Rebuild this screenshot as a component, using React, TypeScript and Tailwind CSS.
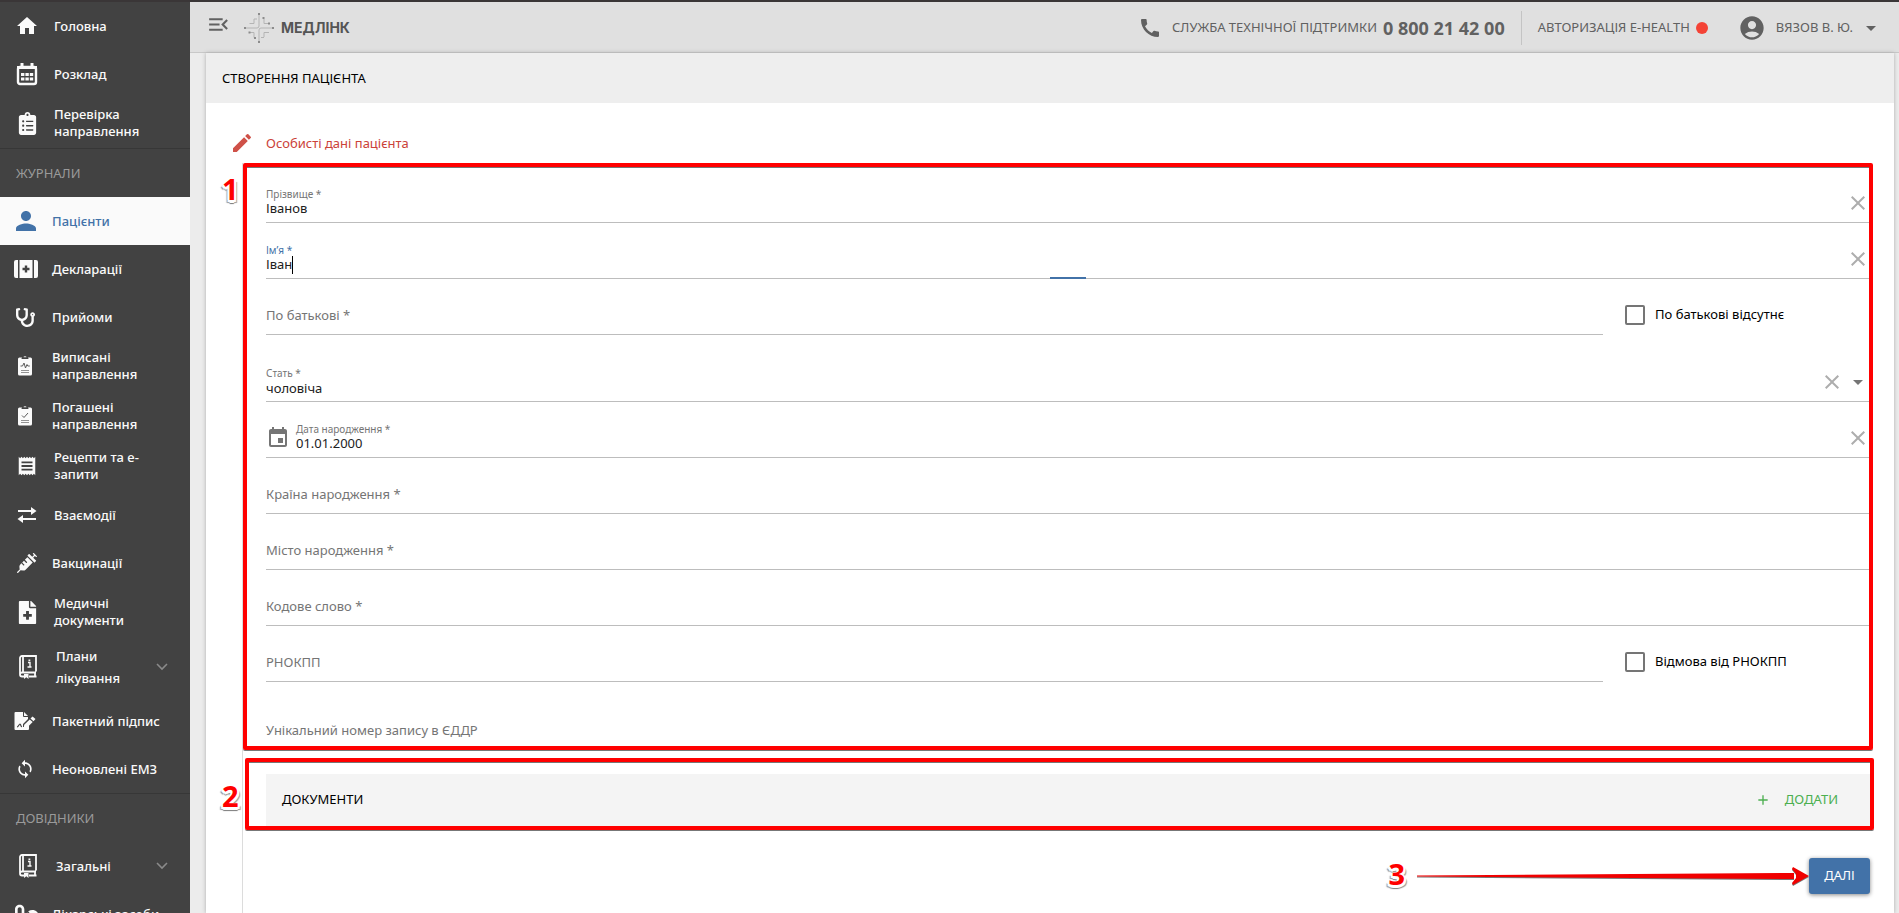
import { useState, type ReactNode } from "react";
import { FaClipboardList, FaFileMedical, FaPills, FaStethoscope, FaSyringe } from "react-icons/fa";
import {
  MdAccountCircle,
  MdAdd,
  MdArrowDropDown,
  MdCall,
  MdClose,
  MdCreate,
  MdEvent,
  MdHome,
  MdMenuOpen,
  MdPerson,
  MdReceipt,
  MdSync,
} from "react-icons/md";

function CalendarIcon() {
  return (
    <svg viewBox="0 0 22 24" className="w-[22px] h-6" fill="none" stroke="currentColor">
      <rect x="2" y="5" width="18" height="17" rx="2" strokeWidth="2.4" />
      <path d="M1 5.500h20M6 1v5M16 1v5" strokeWidth="3" />
      <path d="M5 12.500h3.400m1 0h3.400m1 0h3.400M5 17h3.400m1 0h3.400m1 0h3.400" strokeWidth="3.200" />
    </svg>
  );
}

function CaseIcon() {
  return (
    <svg viewBox="0 0 24 18" className="w-6 h-[18px] -ml-0.5">
      <path d="M2 0h2v18H2a2 2 0 0 1-2-2V2a2 2 0 0 1 2-2zM22 0h-2v18h2a2 2 0 0 0 2-2V2a2 2 0 0 0-2-2z" fill="currentColor" />
      <path d="M5.500 0h13v18h-13z" fill="currentColor" />
      <path d="M12 5.500v7M8.500 9h7" stroke="#424242" strokeWidth="2.400" />
    </svg>
  );
}

function ReferralIcon({ checked }: { checked?: boolean }) {
  return (
    <svg viewBox="0 0 16 20" className="w-4 h-5 -ml-1">
      <rect x="1" y="1.500" width="14" height="18" rx="1.500" fill="currentColor" />
      <path d="M4.500 3a3.500 2.400 0 0 1 7 0z" fill="#424242" />
      <path d="M6.500 1.200a1.500 1 0 0 1 3 0z" fill="currentColor" />
      <path
        d={checked ? "M5 9.500l2 2 4-4.500" : "M3.500 10h2l1.500-3 1.500 5 1.500-3.500.8 1.500h2"}
        fill="none"
        stroke="#5a5a5a"
        strokeWidth="1"
      />
      <path d="M4 14.500h8M4 16.500h8" stroke="#777" strokeWidth=".8" />
    </svg>
  );
}

function ExchangeIcon() {
  return (
    <svg viewBox="0 0 20 16" className="w-5 h-4">
      <path d="M1 4h14M5 12h14" stroke="currentColor" strokeWidth="2.200" />
      <path d="M14 0l5.500 4L14 8zM6 8L.5 12 6 16z" fill="currentColor" />
    </svg>
  );
}

function BookIcon() {
  return (
    <svg viewBox="0 0 18 24" className="w-[18px] h-6 ml-px" fill="none" stroke="currentColor">
      <path d="M17 16.500V1H3a2 2 0 0 0-2 2v16M4 1v15.500M17 17.500H3a2 2 0 0 0 0 4h2M10 21.500h7.500M16 17.500v4" strokeWidth="1.800" />
      <path d="M9 7.500h2V12M8.500 12h4" strokeWidth="1.400" />
      <path d="M9.500 5.300h1.800" strokeWidth="1.600" />
      <path d="M5 19h4.500v5l-2.200-1.800L5 24z" fill="currentColor" stroke="none" />
    </svg>
  );
}

function SignIcon() {
  return (
    <svg viewBox="0 0 22 20" className="w-[22px] h-5 -ml-1">
      <path d="M1.500 1H10l4 4v3l-5 5v3h3l3-2v4a1 1 0 0 1-1 1H1.500a1 1 0 0 1-1-1V2a1 1 0 0 1 1-1z" fill="currentColor" />
      <path d="M9.500 1v4.500H14" fill="none" stroke="#424242" strokeWidth="1" />
      <path d="M3 16c1.500 0 2-3 3-3s.5 3 2 2.500" fill="none" stroke="#424242" strokeWidth="1.200" />
      <path d="M18.500 5.500l3 2.500-2 2.200-3-2.600zM15.700 8.400l3 2.600-5.500 5.500-3.500.6.500-3.300z" fill="currentColor" />
    </svg>
  );
}

function LogoMark() {
  return (
    <svg viewBox="0 0 30 30" className="w-[30px] h-[30px]" fill="none" stroke="#b4b4b4" strokeWidth="1">
      <path d="M15 2v11q0 2-2 2H2M15 28V17q0-2 2-2h11" />
      <path d="M10 6v4.500H5.500M20 6v4.500h5M10 24.500v-5H5M20 24v-4.500h5M10 6h3M17 24.500h3" />
      <path d="M14 1h2M14 29h2M0 15h2M28 15h2M18.500 5h2M24 10.500h2M4.500 19.500h2M10 25h2" stroke="#8c8c8c" strokeWidth="2" />
    </svg>
  );
}

type Item = { label: string; icon: ReactNode; kind?: "wide" | "active" | "group"; indent?: boolean };

const MAIN: Item[] = [
  { label: "Головна", icon: <MdHome size={24} />, indent: true },
  { label: "Розклад", icon: <CalendarIcon />, indent: true },
  { label: "Перевірка направлення", icon: <FaClipboardList size={23} />, kind: "wide", indent: true },
];

const JOURNALS: Item[] = [
  { label: "Пацієнти", icon: <MdPerson size={30} className="-ml-0.5" />, kind: "active" },
  { label: "Декларації", icon: <CaseIcon /> },
  { label: "Прийоми", icon: <FaStethoscope size={19} className="-ml-1" /> },
  { label: "Виписані направлення", icon: <ReferralIcon />, kind: "wide" },
  { label: "Погашені направлення", icon: <ReferralIcon checked />, kind: "wide" },
  { label: "Рецепти та е-запити", icon: <MdReceipt size={22} />, kind: "wide", indent: true },
  { label: "Взаємодії", icon: <ExchangeIcon />, indent: true },
  { label: "Вакцинації", icon: <FaSyringe size={20} /> },
  { label: "Медичні документи", icon: <FaFileMedical size={23} />, kind: "wide", indent: true },
  { label: "Плани лікування", icon: <BookIcon />, kind: "group" },
  { label: "Пакетний підпис", icon: <SignIcon /> },
  { label: "Неоновлені ЕМЗ", icon: <MdSync size={20} className="-ml-1" /> },
];

const DIRECTORIES: Item[] = [
  { label: "Загальні", icon: <BookIcon />, kind: "group" },
  { label: "Лікарські засоби", icon: <FaPills size={24} /> },
];

function NavItem({ item }: { item: Item }) {
  const active = item.kind === "active";
  const group = item.kind === "group";

  return (
    <a
      href="#"
      className={
        "flex items-center shrink-0 min-h-12 py-2 pl-[13px] pr-4 text-[13px] font-medium " +
        (active ? "bg-[#fafafa] text-[#4272a8] " : "text-[#fafafa] ") +
        (group ? "leading-[22px]" : "leading-[17px]")
      }
    >
      <span className="w-7 shrink-0 flex justify-center">{item.icon}</span>
      <span className={"flex-1 " + (group ? "pl-[15px] pr-4" : item.indent ? "pl-[13px]" : "pl-[11px]")}>
        {item.label}
      </span>
      {group && (
        <svg viewBox="0 0 12 8" className="w-3 h-2 mr-1.5" fill="none" stroke="#8a8a8a" strokeWidth="1.600">
          <path d="M1 1l5 5 5-5" />
        </svg>
      )}
    </a>
  );
}

function Section({ title, items }: { title: string; items: Item[] }) {
  return (
    <>
      <h2 className="h-[49px] shrink-0 border-t border-[#373737] flex items-center pt-0.5 pl-4 text-[13px] text-[#9a9a9a]">
        {title}
      </h2>
      {items.map((item) => (
        <NavItem key={item.label} item={item} />
      ))}
    </>
  );
}

type FieldProps = {
  id: string;
  label: string;
  initial?: string;
  focused?: boolean;
  options?: string[];
  icon?: ReactNode;
};

function Field({ id, label, initial = "", focused, options, icon }: FieldProps) {
  const [value, setValue] = useState(initial);
  const filled = value !== "";
  const control = "block outline-none bg-transparent text-[13px] h-[18px] text-[#212121] ";

  return (
    <div className="relative flex-1 h-14 border-b border-[#bdbdbd] flex items-center">
      {icon && <span className="w-[30px] pt-4 text-[#757575]">{icon}</span>}
      <div className="flex-1 flex flex-col pt-4">
        <label
          htmlFor={id}
          className={
            filled
              ? "text-[10px] leading-3 " + (focused ? "text-[#4272a8]" : "text-[#757575]")
              : "text-[13px] leading-5 text-[#757575]"
          }
        >
          {label}
        </label>
        <div className={filled ? "flex items-center" : "h-0 overflow-hidden"}>
          {options ? (
            <select
              id={id}
              value={value}
              onChange={(e) => setValue(e.target.value)}
              className={control + "w-full appearance-none"}
            >
              {options.map((option) => (
                <option key={option}>{option}</option>
              ))}
            </select>
          ) : (
            <input
              id={id}
              value={value}
              onChange={(e) => setValue(e.target.value)}
              className={control + (focused ? "[field-sizing:content] caret-transparent" : "w-full")}
            />
          )}
          {focused && <span className="w-px h-[18px] bg-black" />}
        </div>
      </div>
      {filled && (
        <button type="button" aria-label="Очистити" onClick={() => setValue("")} className="pt-4 text-[#adadad]">
          <MdClose size={24} />
        </button>
      )}
      {options && <MdArrowDropDown size={24} className="box-content pt-4 pl-0.5 text-[#757575]" />}
      {focused && <span className="absolute left-1/2 -translate-x-1/2 -bottom-px w-9 h-0.5 bg-[#4272a8]" />}
    </div>
  );
}

function Check({ id, label }: { id: string; label: string }) {
  return (
    <div className="w-[245px] flex items-center gap-2.5 pt-4">
      <input id={id} type="checkbox" className="appearance-none w-5 h-5 border-2 border-[#757575] rounded-xs" />
      <label htmlFor={id} className="text-[13px] text-black">
        {label}
      </label>
    </div>
  );
}

// Callout number: red digit, white outline, thin grey shade under the outline
function Marker({ children }: { children: ReactNode }) {
  return (
    <span className="block font-['Open_Sans'] font-bold text-[29px] leading-8 text-[#ff0000] [text-shadow:2px_0_0_#fff,-2px_0_0_#fff,0_2px_0_#fff,2px_2px_0_#fff,-2px_2px_0_#fff,0_3px_0_#fff,3px_3px_1px_#999,-3px_3px_1px_#999,0_4px_1px_#777]">
      {children}
    </span>
  );
}

const FRAME = "absolute pointer-events-none border-4 border-[#ff0000] rounded-xs shadow-[0_1px_0_#777,inset_0_1px_0_#777]";

export default function App() {
  return (
    <div className="h-screen overflow-hidden flex flex-col border-t-2 border-[#3a3637] bg-[#ececec] font-['Noto_Sans',sans-serif]">
      <div className="flex-1 min-h-0 flex">
        <nav className="w-[190px] shrink-0 bg-[#424242] flex flex-col overflow-hidden">
          {MAIN.map((item) => (
            <NavItem key={item.label} item={item} />
          ))}
          <Section title="ЖУРНАЛИ" items={JOURNALS} />
          <Section title="ДОВІДНИКИ" items={DIRECTORIES} />
        </nav>

        <div className="flex-1 min-w-0 flex flex-col">
          <header className="h-[51px] shrink-0 bg-[#e0e0e0] border-b border-[#c8c8c8] flex items-center pt-0.5 pl-4 pr-4 text-[13px] text-[#616161]">
            <button type="button" aria-label="Меню" className="pb-2">
              <MdMenuOpen size={25} />
            </button>
            <a href="#" className="ml-[13px] flex items-center gap-[7px]">
              <LogoMark />
              <span className="font-['Inter'] font-bold text-sm text-[#555]">МЕДЛІНК</span>
            </a>
            <div className="ml-auto flex items-center">
              <MdCall size={24} />
              <span className="ml-2.5">СЛУЖБА ТЕХНІЧНОЇ ПІДТРИМКИ</span>
              <b className="ml-1.5 text-lg">0 800 21 42 00</b>
            </div>
            <div className="ml-4 pl-4 h-[34px] border-l border-[#c4c4c4] flex items-center">
              АВТОРИЗАЦІЯ E-HEALTH
              <span className="ml-1.5 w-3 h-3 rounded-full bg-[#f44336]" />
            </div>
            <button type="button" className="ml-[30px] flex items-center">
              <MdAccountCircle size={28} />
              <span className="ml-2.5">ВЯЗОВ В. Ю.</span>
              <MdArrowDropDown size={24} className="ml-1.5" />
            </button>
          </header>

          <main className="flex-1 ml-4 mr-[5px] bg-white shadow-[0_0_4px_#aaa] overflow-hidden">
            <h1 className="h-[50px] bg-[#eeeeee] flex items-center pt-0.5 pl-4 text-[13px] text-black">СТВОРЕННЯ ПАЦІЄНТА</h1>

            <div className="h-[60px] pt-5 flex items-center gap-3 pl-6">
              <MdCreate size={24} className="text-[#cf5148]" />
              <h2 className="pt-0.5 text-[13px] text-[#cb4239]">Особисті дані пацієнта</h2>
            </div>

            <form className="relative ml-9 mr-6 pl-[23px] pt-1 pb-10 border-l border-[#dcdcdc]">
              <div className="relative">
                <Field id="surname" label="Прізвище *" initial="Іванов" />
                <Field id="name" label="Ім’я *" initial="Іван" focused />
                <div className="flex gap-[22px] mb-[11px]">
                  <Field id="patronymic" label="По батькові *" />
                  <Check id="no-patronymic" label="По батькові відсутнє" />
                </div>
                <Field id="sex" label="Стать *" initial="чоловіча" options={["чоловіча", "жіноча"]} />
                <Field id="birthday" label="Дата народження *" initial="01.01.2000" icon={<MdEvent size={24} />} />
                <Field id="country" label="Країна народження *" />
                <Field id="city" label="Місто народження *" />
                <Field id="codeword" label="Кодове слово *" />
                <div className="flex gap-[22px] mb-3">
                  <Field id="rnokpp" label="РНОКПП" />
                  <Check id="no-rnokpp" label="Відмова від РНОКПП" />
                </div>
                <Field id="unzr" label="Унікальний номер запису в ЄДДР" />
                <div className={FRAME + " -top-1 bottom-0 -left-[23px] -right-[3px]"} />
                <div className="absolute top-1.5 -left-11">
                  <Marker>1</Marker>
                </div>
              </div>

              <section className="relative mt-6 h-[52px] bg-[#f4f4f4] flex items-center justify-between px-4 text-[13px]">
                <h3 className="text-black">ДОКУМЕНТИ</h3>
                <button type="button" className="flex items-center gap-3.5 mr-4 text-[#4caf50]">
                  <MdAdd size={16} />
                  ДОДАТИ
                </button>
                <div className={FRAME + " -top-4 -bottom-1 -left-[21px] -right-1"} />
                <div className="absolute top-1.5 -left-11">
                  <Marker>2</Marker>
                </div>
              </section>

              <div className="mt-8 flex items-center justify-end">
                <div className="pb-1">
                  <Marker>3</Marker>
                </div>
                <svg viewBox="0 0 392 20" className="ml-3 w-[392px] h-5 drop-shadow-[0_1px_0_#777]" fill="#f00000">
                  <path d="M0 9.500L377 7v6L0 10.500z" />
                  <path d="M376 1l16 9-16 9-1-2 4-5v-4l-4-5z" />
                </svg>
                <button
                  type="submit"
                  className="w-[61px] h-9 rounded-[3px] bg-[#4272a8] text-[13px] text-white shadow-[0_1px_4px_#888]"
                >
                  ДАЛІ
                </button>
              </div>
            </form>
          </main>
        </div>
      </div>
    </div>
  );
}
